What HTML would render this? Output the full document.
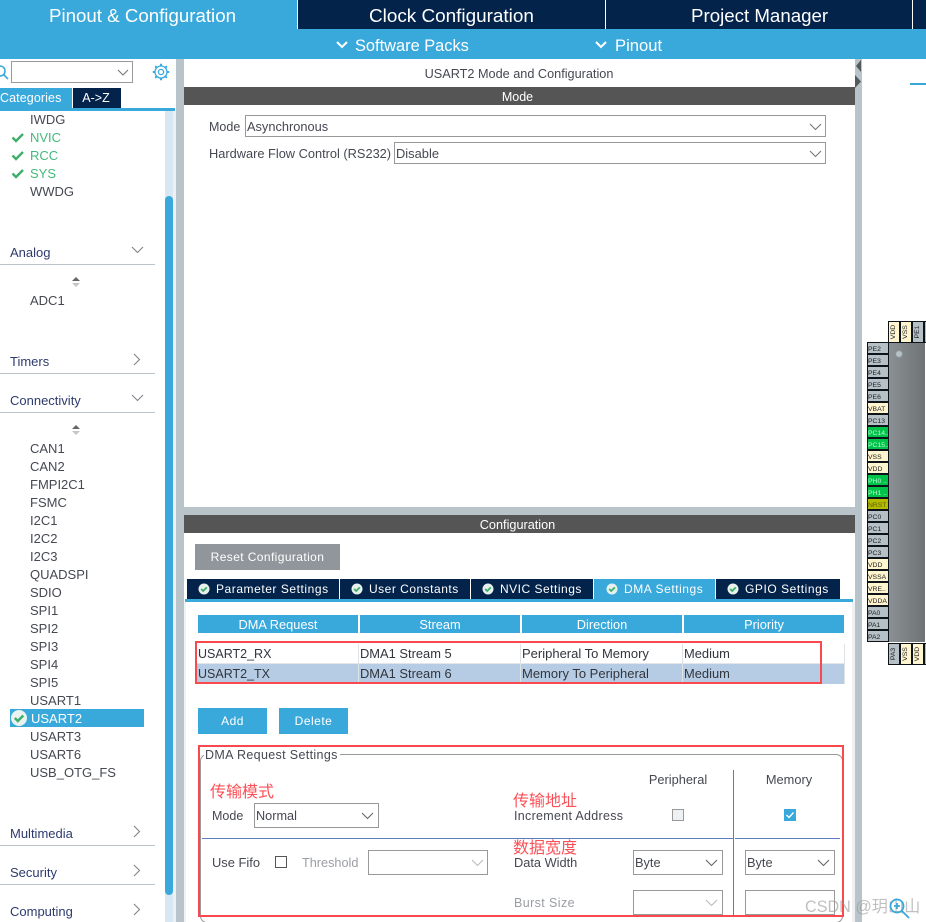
<!DOCTYPE html>
<html lang="en"><head><meta charset="utf-8"><title>Pinout &amp; Configuration</title>
<style>
html,body{margin:0;padding:0;background:#fff}
#p{position:relative;width:926px;height:922px;overflow:hidden;background:#fff;font-family:"Liberation Sans","Noto Sans CJK SC",sans-serif;font-size:13px;color:#464852}
#p div,#p span,#p svg{position:absolute}
.t{white-space:nowrap;line-height:18px;height:18px;margin-top:1px}
.c{white-space:nowrap;line-height:18px;height:18px;text-align:center;margin-top:1px}
.w{color:#fff}
.n{color:#2e3a6e}
.g{color:#45b97c}
.d{color:#9a9da3}
.z{color:#fb5056;font-size:16px}
.s{border:1px solid #999;box-sizing:border-box;background:#fff}
.pin{box-sizing:border-box;border:1px solid #0d1318;background:#b5c0c7;left:867px;width:22px;height:12px;font-size:6.8px;line-height:13px;color:#222;white-space:nowrap;overflow:hidden;padding-left:0}
.y{background:#fff6cf}
.gr{background:#00c44a;color:#bff5d0}
.ol{background:#b3bb00;color:#5d6100}
.v{box-sizing:border-box;border:1px solid #0d1318;top:321px;width:12px;height:22px}
.v span{left:-5px;top:5px;width:20px;text-align:center;font-size:6.8px;line-height:10px;color:#222;transform:rotate(-90deg)}
</style></head><body><div id="p">

<!-- header -->
<div style="left:0;top:0;width:926px;height:59px;background:#39a9dc"></div>
<div style="left:297px;top:0;width:629px;height:29px;background:#03234b"></div>
<div style="left:297px;top:0;width:1px;height:29px;background:#fff"></div>
<div style="left:605px;top:0;width:1px;height:29px;background:#fff"></div>
<div style="left:912px;top:0;width:1px;height:29px;background:#fff"></div>
<div class="t w" style="left:49px;top:6px;font-size:18.7px">Pinout &amp; Configuration</div>
<div class="t w" style="left:369px;top:7px;font-size:18.9px">Clock Configuration</div>
<div class="t w" style="left:691px;top:6px;font-size:18.7px">Project Manager</div>
<svg style="left:335px;top:40px" width="14" height="10" fill="none" stroke="#fff" stroke-width="2"><path d="M2 2l5 5 5-5"/></svg>
<div class="t w" style="left:355px;top:36px;font-size:16.4px">Software Packs</div>
<svg style="left:594px;top:40px" width="14" height="10" fill="none" stroke="#fff" stroke-width="2"><path d="M2 2l5 5 5-5"/></svg>
<div class="t w" style="left:615px;top:36px;font-size:16.6px">Pinout</div>

<!-- splitters -->
<div style="left:176px;top:59px;width:8px;height:863px;background:#b8c4ca"></div>
<div style="left:855px;top:59px;width:7px;height:863px;background:#b8c4ca"></div>
<svg style="left:855px;top:59px" width="7" height="34" fill="#55595c"><path d="M6 1v12L1 7z"/><path d="M0 16v13l6-6.500z"/></svg>
<div style="left:910px;top:83px;width:16px;height:2px;background:#39a9dc"></div>

<!-- sidebar top -->
<svg style="left:-6px;top:63px" width="16" height="18" fill="none" stroke="#39a9dc" stroke-width="1.600"><circle cx="6" cy="8" r="5"/><path d="M10 12l4 4"/></svg>
<div class="s" style="left:11px;top:61px;width:122px;height:22px"></div>
<svg style="left:117px;top:69px" width="12" height="8" fill="none" stroke="#777" stroke-width="1.100"><path d="M1 1l5 5 5-5"/></svg>
<svg style="left:152px;top:63px" width="18" height="18" viewBox="0 0 18 18" fill="none" stroke="#39a9dc"><circle cx="9" cy="9" r="2.600" stroke-width="1.300"/><circle cx="9" cy="9" r="6" stroke-width="1.300"/><path d="M9 .800v2.400M9 14.800v2.400M.800 9h2.400M14.800 9h2.400M3.200 3.200l1.700 1.700M13.100 13.100l1.700 1.700M14.800 3.200l-1.700 1.700M4.900 13.100l-1.700 1.700" stroke-width="2"/></svg>
<div style="left:0;top:88px;width:72px;height:20px;background:#39a9dc"></div>
<div class="t w" style="left:0;top:88px;font-size:12.5px;letter-spacing:.1px">Categories</div>
<div style="left:73px;top:88px;width:48px;height:20px;background:#03234b"></div>
<div class="c w" style="left:72px;top:88px;width:48px;font-size:12.5px">A-&gt;Z</div>
<div style="left:0;top:108px;width:175px;height:3px;background:#39a9dc"></div>
<div style="left:165px;top:111px;width:8px;height:811px;background:#d8e7f4"></div>
<div style="left:173px;top:111px;width:3px;height:811px;background:#eef0f1"></div>
<div style="left:165px;top:196px;width:8px;height:699px;background:#39a9dc;border-radius:4px"></div>

<!-- sidebar lists -->
<div class="t" style="left:30px;top:110px">IWDG</div>
<div class="t g" style="left:30px;top:128px">NVIC</div>
<div class="t g" style="left:30px;top:146px">RCC</div>
<div class="t g" style="left:30px;top:164px">SYS</div>
<div class="t" style="left:30px;top:182px">WWDG</div>
<svg style="left:11px;top:132px" width="14" height="11" fill="none" stroke="#3fae6c" stroke-width="2.400"><path d="M1.500 5.500l3.500 3.500 7-7"/></svg>
<svg style="left:11px;top:150px" width="14" height="11" fill="none" stroke="#3fae6c" stroke-width="2.400"><path d="M1.500 5.500l3.500 3.500 7-7"/></svg>
<svg style="left:11px;top:168px" width="14" height="11" fill="none" stroke="#3fae6c" stroke-width="2.400"><path d="M1.500 5.500l3.500 3.500 7-7"/></svg>

<div class="t n" style="left:10px;top:243px">Analog</div>
<svg style="left:131px;top:246px" width="13" height="8" fill="none" stroke="#808488" stroke-width="1.100"><path d="M1 1l5.500 5.500L12 1"/></svg>
<div style="left:0;top:264px;width:155px;height:1px;background:#b8c4ca"></div>
<svg style="left:71px;top:276px" width="10" height="12"><path d="M1 5l4-4 4 4z" fill="#666"/><path d="M1 7l4 4 4-4z" fill="#c4c6c8"/></svg>
<div class="t" style="left:30px;top:291px">ADC1</div>

<div class="t n" style="left:10px;top:352px">Timers</div>
<svg style="left:133px;top:353px" width="8" height="13" fill="none" stroke="#808488" stroke-width="1.100"><path d="M1 1l5.500 5.500L1 12"/></svg>
<div style="left:0;top:373px;width:155px;height:1px;background:#b8c4ca"></div>

<div class="t n" style="left:10px;top:391px">Connectivity</div>
<svg style="left:131px;top:394px" width="13" height="8" fill="none" stroke="#808488" stroke-width="1.100"><path d="M1 1l5.500 5.500L12 1"/></svg>
<div style="left:0;top:412px;width:155px;height:1px;background:#b8c4ca"></div>
<svg style="left:71px;top:424px" width="10" height="12"><path d="M1 5l4-4 4 4z" fill="#666"/><path d="M1 7l4 4 4-4z" fill="#c4c6c8"/></svg>

<div class="t" style="left:30px;top:439px">CAN1</div>
<div class="t" style="left:30px;top:457px">CAN2</div>
<div class="t" style="left:30px;top:475px">FMPI2C1</div>
<div class="t" style="left:30px;top:493px">FSMC</div>
<div class="t" style="left:30px;top:511px">I2C1</div>
<div class="t" style="left:30px;top:529px">I2C2</div>
<div class="t" style="left:30px;top:547px">I2C3</div>
<div class="t" style="left:30px;top:565px">QUADSPI</div>
<div class="t" style="left:30px;top:583px">SDIO</div>
<div class="t" style="left:30px;top:601px">SPI1</div>
<div class="t" style="left:30px;top:619px">SPI2</div>
<div class="t" style="left:30px;top:637px">SPI3</div>
<div class="t" style="left:30px;top:655px">SPI4</div>
<div class="t" style="left:30px;top:673px">SPI5</div>
<div class="t" style="left:30px;top:691px">USART1</div>
<div style="left:10px;top:709px;width:134px;height:18px;background:#39a9dc"></div>
<svg style="left:10px;top:709px" width="18" height="18"><circle cx="9" cy="9" r="8" fill="#eaf3ef"/><path d="M4.800 9l3 3 5.500-5.500" fill="none" stroke="#3fae6c" stroke-width="2.400"/></svg>
<div class="t w" style="left:31px;top:709px">USART2</div>
<div class="t" style="left:30px;top:727px">USART3</div>
<div class="t" style="left:30px;top:745px">USART6</div>
<div class="t" style="left:30px;top:763px">USB_OTG_FS</div>

<div class="t n" style="left:10px;top:824px">Multimedia</div>
<svg style="left:133px;top:825px" width="8" height="13" fill="none" stroke="#808488" stroke-width="1.100"><path d="M1 1l5.500 5.500L1 12"/></svg>
<div style="left:0;top:845px;width:155px;height:1px;background:#b8c4ca"></div>
<div class="t n" style="left:10px;top:863px">Security</div>
<svg style="left:133px;top:864px" width="8" height="13" fill="none" stroke="#808488" stroke-width="1.100"><path d="M1 1l5.500 5.500L1 12"/></svg>
<div style="left:0;top:884px;width:155px;height:1px;background:#b8c4ca"></div>
<div class="t n" style="left:10px;top:902px">Computing</div>
<svg style="left:133px;top:903px" width="8" height="13" fill="none" stroke="#808488" stroke-width="1.100"><path d="M1 1l5.500 5.500L1 12"/></svg>

<!-- mode panel -->
<div class="c" style="left:184px;top:64px;width:670px;font-size:12.7px">USART2 Mode and Configuration</div>
<div style="left:184px;top:87px;width:671px;height:18px;background:#545554"></div>
<div class="c w" style="left:184px;top:87px;width:667px;font-size:12.5px">Mode</div>
<div class="t" style="left:209px;top:117px;font-size:12.5px">Mode</div>
<div class="s" style="left:245px;top:115px;width:581px;height:22px"></div>
<div class="t" style="left:247px;top:117px;font-size:12.8px">Asynchronous</div>
<svg style="left:809px;top:123px" width="13" height="8" fill="none" stroke="#777" stroke-width="1.100"><path d="M1 1l5.500 5.500L12 1"/></svg>
<div class="t" style="left:209px;top:144px;font-size:12.8px">Hardware Flow Control (RS232)</div>
<div class="s" style="left:394px;top:142px;width:432px;height:22px"></div>
<div class="t" style="left:396px;top:144px;font-size:12.9px">Disable</div>
<svg style="left:809px;top:150px" width="13" height="8" fill="none" stroke="#777" stroke-width="1.100"><path d="M1 1l5.500 5.500L12 1"/></svg>

<!-- config -->
<div style="left:184px;top:507px;width:671px;height:8px;background:#b8c4ca"></div>
<div style="left:184px;top:515px;width:671px;height:18px;background:#545554"></div>
<div class="c w" style="left:184px;top:515px;width:667px;font-size:12.7px">Configuration</div>
<div style="left:195px;top:544px;width:145px;height:26px;background:#91969c"></div>
<div class="c" style="left:195px;top:547px;width:145px;font-size:12px;letter-spacing:.4px;color:#fff">Reset Configuration</div>

<div style="left:187px;top:579px;width:152px;height:20px;background:#03234b"></div>
<div style="left:340px;top:579px;width:130px;height:20px;background:#03234b"></div>
<div style="left:471px;top:579px;width:122px;height:20px;background:#03234b"></div>
<div style="left:594px;top:579px;width:121px;height:20px;background:#39a9dc"></div>
<div style="left:716px;top:579px;width:124px;height:20px;background:#03234b"></div>
<div style="left:185px;top:599px;width:668px;height:3px;background:#39a9dc"></div>
<div style="left:184px;top:602px;width:2px;height:320px;background:#f0f1f2"></div>
<div style="left:852px;top:602px;width:3px;height:320px;background:#eef0f1"></div>
<svg style="left:198px;top:583px" width="12" height="12"><circle cx="6" cy="6" r="5.500" fill="#e6f1ec"/><path d="M3.200 6l2 2 3.600-3.600" fill="none" stroke="#3fae6c" stroke-width="1.800"/></svg>
<svg style="left:351px;top:583px" width="12" height="12"><circle cx="6" cy="6" r="5.500" fill="#e6f1ec"/><path d="M3.200 6l2 2 3.600-3.600" fill="none" stroke="#3fae6c" stroke-width="1.800"/></svg>
<svg style="left:482px;top:583px" width="12" height="12"><circle cx="6" cy="6" r="5.500" fill="#e6f1ec"/><path d="M3.200 6l2 2 3.600-3.600" fill="none" stroke="#3fae6c" stroke-width="1.800"/></svg>
<svg style="left:606px;top:583px" width="12" height="12"><circle cx="6" cy="6" r="5.500" fill="#e6f1ec"/><path d="M3.200 6l2 2 3.600-3.600" fill="none" stroke="#3fae6c" stroke-width="1.800"/></svg>
<svg style="left:727px;top:583px" width="12" height="12"><circle cx="6" cy="6" r="5.500" fill="#e6f1ec"/><path d="M3.200 6l2 2 3.600-3.600" fill="none" stroke="#3fae6c" stroke-width="1.800"/></svg>
<div class="t w" style="left:216px;top:579px;font-size:12px;letter-spacing:.55px">Parameter Settings</div>
<div class="t w" style="left:369px;top:579px;font-size:12px;letter-spacing:.5px">User Constants</div>
<div class="t w" style="left:500px;top:579px;font-size:12px;letter-spacing:.5px">NVIC Settings</div>
<div class="t w" style="left:624px;top:579px;font-size:12px;letter-spacing:.55px">DMA Settings</div>
<div class="t w" style="left:745px;top:579px;font-size:12px;letter-spacing:.55px">GPIO Settings</div>

<!-- table -->
<div style="left:198px;top:615px;width:160px;height:18px;background:#39a9dc"></div>
<div style="left:360px;top:615px;width:160px;height:18px;background:#39a9dc"></div>
<div style="left:522px;top:615px;width:160px;height:18px;background:#39a9dc"></div>
<div style="left:684px;top:615px;width:160px;height:18px;background:#39a9dc"></div>
<div class="c w" style="left:198px;top:615px;width:160px;font-size:12.8px">DMA Request</div>
<div class="c w" style="left:360px;top:615px;width:160px;font-size:12.8px">Stream</div>
<div class="c w" style="left:522px;top:615px;width:160px;font-size:12.8px">Direction</div>
<div class="c w" style="left:684px;top:615px;width:160px;font-size:12.8px">Priority</div>
<div style="left:197px;top:664px;width:648px;height:20px;background:#b5cce4"></div>
<div style="left:197px;top:663px;width:648px;height:1px;background:#e3e6e8"></div>
<div style="left:358px;top:644px;width:1px;height:40px;background:#e0e3e6"></div>
<div style="left:520px;top:644px;width:1px;height:40px;background:#e0e3e6"></div>
<div style="left:682px;top:644px;width:1px;height:40px;background:#e0e3e6"></div>
<div style="left:844px;top:644px;width:1px;height:40px;background:#e0e3e6"></div>
<div class="t" style="left:198px;top:644px;font-size:12.5px;color:#33353d">USART2_RX</div>
<div class="t" style="left:360px;top:644px;font-size:12.9px;color:#33353d">DMA1 Stream 5</div>
<div class="t" style="left:522px;top:644px;font-size:13px;color:#33353d">Peripheral To Memory</div>
<div class="t" style="left:684px;top:644px;font-size:12.9px;color:#33353d">Medium</div>
<div class="t" style="left:198px;top:664px;font-size:12.5px;color:#33353d">USART2_TX</div>
<div class="t" style="left:360px;top:664px;font-size:12.9px;color:#33353d">DMA1 Stream 6</div>
<div class="t" style="left:522px;top:664px;font-size:13px;color:#33353d">Memory To Peripheral</div>
<div class="t" style="left:684px;top:664px;font-size:12.9px;color:#33353d">Medium</div>
<div style="left:195px;top:641px;width:627px;height:43px;box-sizing:border-box;border:2px solid #f9484e"></div>

<div style="left:198px;top:708px;width:69px;height:26px;background:#39a9dc"></div>
<div style="left:279px;top:708px;width:69px;height:26px;background:#39a9dc"></div>
<div class="c w" style="left:198px;top:711px;width:69px;font-size:12px;letter-spacing:.5px">Add</div>
<div class="c w" style="left:279px;top:711px;width:69px;font-size:12px;letter-spacing:.5px">Delete</div>

<!-- settings fieldset -->
<div style="left:200px;top:754px;width:643px;height:169px;box-sizing:border-box;border:1px solid #999;border-radius:7px"></div>
<div style="left:204px;top:748px;width:136px;height:12px;background:#fff"></div>
<div class="t" style="left:205px;top:745px;font-size:12.5px;letter-spacing:.35px">DMA Request Settings</div>

<div class="t z" style="left:210px;top:783px">传输模式</div>
<div class="t z" style="left:513px;top:792px">传输地址</div>
<div class="t z" style="left:513px;top:839px">数据宽度</div>

<div class="t" style="left:212px;top:806px;font-size:12.5px">Mode</div>
<div class="s" style="left:254px;top:803px;width:125px;height:25px"></div>
<div class="t" style="left:256px;top:806px;font-size:12.7px">Normal</div>
<svg style="left:361px;top:812px" width="13" height="8" fill="none" stroke="#666" stroke-width="1.100"><path d="M1 1l5.500 5.500L12 1"/></svg>

<div class="t" style="left:514px;top:806px;font-size:12.5px;letter-spacing:.3px">Increment Address</div>
<div class="c" style="left:623px;top:770px;width:110px;font-size:12.8px">Peripheral</div>
<div class="c" style="left:734px;top:770px;width:110px;font-size:12.8px">Memory</div>
<div style="left:672px;top:809px;width:12px;height:12px;box-sizing:border-box;border:1px solid #999;background:#eef1f4"></div>
<svg style="left:784px;top:809px" width="12" height="12"><rect width="12" height="12" fill="#39a9dc"/><path d="M2.500 6l2.500 2.500 4.500-5" fill="none" stroke="#fff" stroke-width="1.400"/></svg>

<div style="left:202px;top:838px;width:531px;height:1px;background:#5b7dbd"></div>
<div style="left:735px;top:838px;width:105px;height:1px;background:#5b7dbd"></div>
<div style="left:733px;top:770px;width:1px;height:145px;background:#5b7dbd"></div>

<div class="t" style="left:212px;top:853px;font-size:12.9px">Use Fifo</div>
<div style="left:275px;top:856px;width:12px;height:12px;box-sizing:border-box;border:1px solid #555;background:#fff"></div>
<div class="t d" style="left:302px;top:853px;font-size:12.7px">Threshold</div>
<div class="s" style="left:368px;top:850px;width:120px;height:25px"></div>
<svg style="left:471px;top:859px" width="13" height="8" fill="none" stroke="#bbb" stroke-width="1.100"><path d="M1 1l5.500 5.500L12 1"/></svg>

<div class="t" style="left:514px;top:853px;font-size:12.8px">Data Width</div>
<div class="s" style="left:633px;top:850px;width:90px;height:25px"></div>
<div class="t" style="left:635px;top:853px;font-size:12.8px">Byte</div>
<svg style="left:705px;top:859px" width="13" height="8" fill="none" stroke="#666" stroke-width="1.100"><path d="M1 1l5.500 5.500L12 1"/></svg>
<div class="s" style="left:745px;top:850px;width:90px;height:25px"></div>
<div class="t" style="left:747px;top:853px;font-size:12.8px">Byte</div>
<svg style="left:817px;top:859px" width="13" height="8" fill="none" stroke="#666" stroke-width="1.100"><path d="M1 1l5.500 5.500L12 1"/></svg>

<div class="t d" style="left:514px;top:893px;font-size:12.5px;letter-spacing:.4px">Burst Size</div>
<div class="s" style="left:633px;top:890px;width:90px;height:25px"></div>
<svg style="left:705px;top:899px" width="13" height="8" fill="none" stroke="#bbb" stroke-width="1.100"><path d="M1 1l5.500 5.500L12 1"/></svg>
<div class="s" style="left:745px;top:890px;width:90px;height:25px"></div>

<div style="left:198px;top:745px;width:646px;height:172px;box-sizing:border-box;border:2px solid #f9484e"></div>

<!-- chip -->
<div style="left:888px;top:342px;width:38px;height:301px;background:linear-gradient(90deg,#8a9094,#6f7375);border:1px solid #fff;box-sizing:border-box"></div>
<div style="left:895px;top:350px;width:6px;height:6px;border-radius:50%;background:#b5c0c7;border:1px solid #8b9297"></div>
<div class="v y" style="left:888px"><span>VDD</span></div>
<div class="v y" style="left:900px"><span>VSS</span></div>
<div class="v" style="left:912px;background:#b5c0c7"><span>PE1</span></div>
<div class="v" style="left:924px;background:#b5c0c7"></div>
<div class="v" style="left:888px;top:643px;background:#b5c0c7"><span>PA3</span></div>
<div class="v y" style="left:900px;top:643px"><span>VSS</span></div>
<div class="v y" style="left:912px;top:643px"><span>VDD</span></div>
<div class="v" style="left:924px;top:643px;background:#b5c0c7"></div>

<div class="pin" style="top:342px">PE2</div>
<div class="pin" style="top:354px">PE3</div>
<div class="pin" style="top:366px">PE4</div>
<div class="pin" style="top:378px">PE5</div>
<div class="pin" style="top:390px">PE6</div>
<div class="pin y" style="top:402px">VBAT</div>
<div class="pin" style="top:414px">PC13</div>
<div class="pin gr" style="top:426px">PC14..</div>
<div class="pin gr" style="top:438px">PC15..</div>
<div class="pin y" style="top:450px">VSS</div>
<div class="pin y" style="top:462px">VDD</div>
<div class="pin gr" style="top:474px">PH0 ..</div>
<div class="pin gr" style="top:486px">PH1 ..</div>
<div class="pin ol" style="top:498px">NRST</div>
<div class="pin" style="top:510px">PC0</div>
<div class="pin" style="top:522px">PC1</div>
<div class="pin" style="top:534px">PC2</div>
<div class="pin" style="top:546px">PC3</div>
<div class="pin y" style="top:558px">VDD</div>
<div class="pin y" style="top:570px">VSSA</div>
<div class="pin y" style="top:582px">VRE..</div>
<div class="pin y" style="top:594px">VDDA</div>
<div class="pin" style="top:606px">PA0</div>
<div class="pin" style="top:618px">PA1</div>
<div class="pin" style="top:630px">PA2</div>

<!-- watermark -->
<div class="t" style="left:805px;top:897px;font-size:16.2px;color:rgba(150,150,150,.6)">CSDN @玥山山</div>
<svg style="left:886px;top:895px" width="26" height="26" fill="none" stroke="#39a9dc" stroke-width="1.800"><circle cx="11" cy="11" r="6.500"/><path d="M16 16l7 7M8 11h6M11 8v6"/></svg>

</div></body></html>
